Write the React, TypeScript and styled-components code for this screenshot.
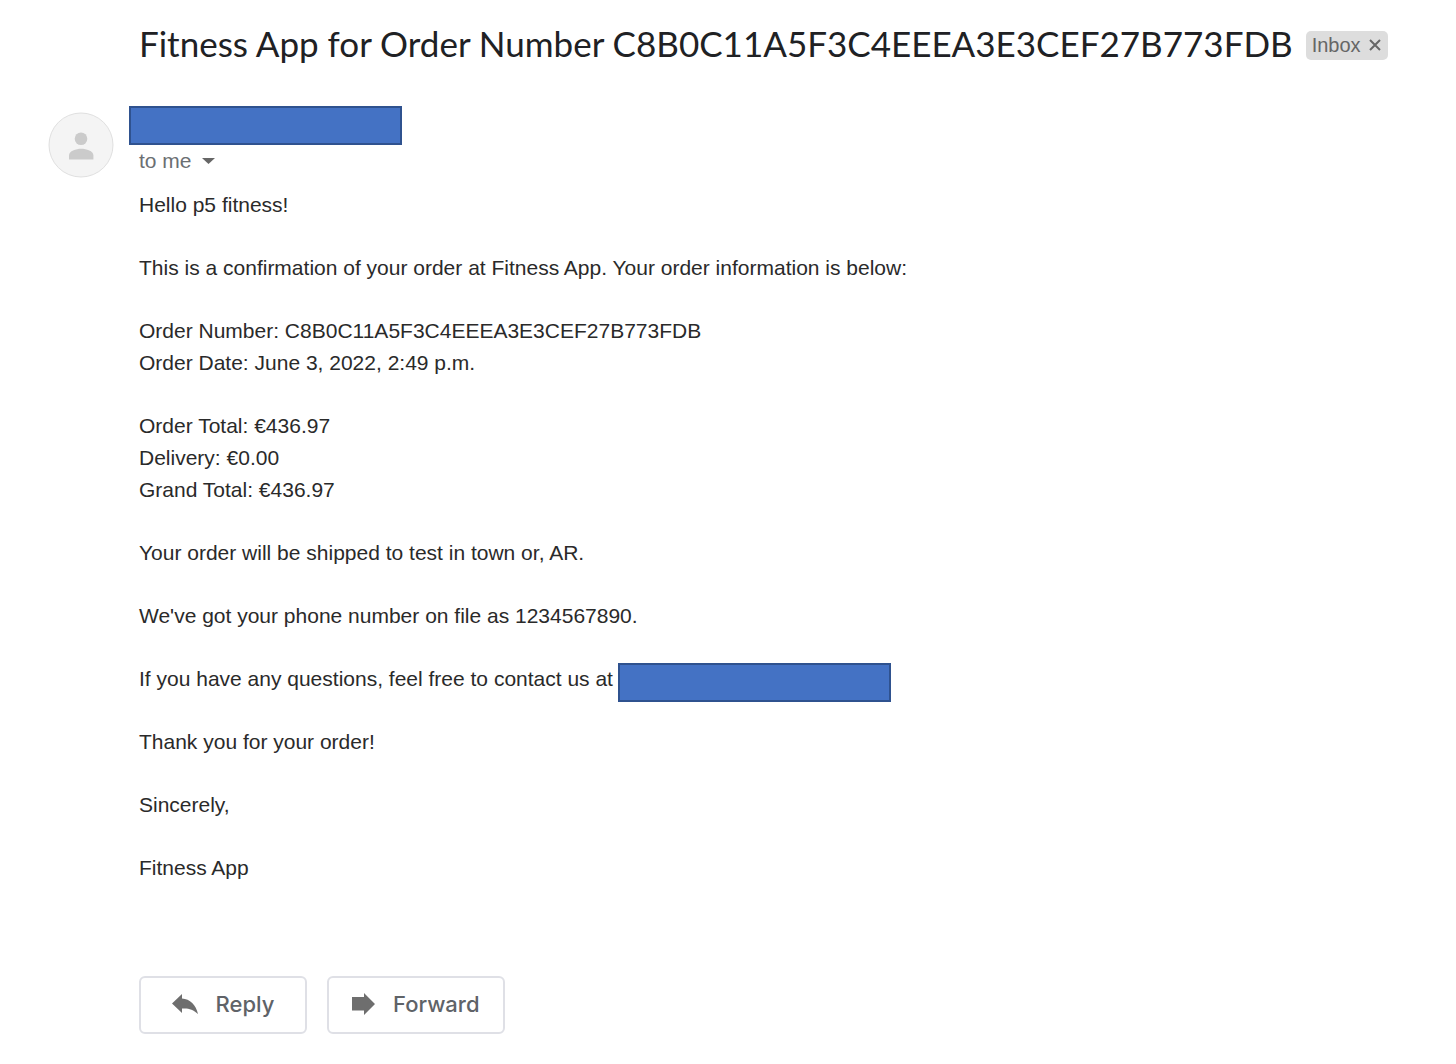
import React from 'react';
import styled, { createGlobalStyle } from 'styled-components';

const GlobalStyle = createGlobalStyle`
  * { box-sizing: border-box; }
  body { margin: 0; background: #fff; color: #2a2a2a; font-family: "Liberation Sans", Arial, sans-serif; }
`;

const Message = styled.main`
  padding: 20px 48px 30px;
`;
const Header = styled.header`
  display: flex;
  align-items: center;
  gap: 13px;
  padding-left: 91px;
  height: 50px;
`;
const Subject = styled.h1`
  margin: 0;
  padding-bottom: 4px;
  font: 400 35px/46px "Lato", sans-serif;
  color: #202124;
  white-space: nowrap;
`;
const Label = styled.div`
  display: flex;
  align-items: center;
  gap: 8px;
  height: 29px;
  padding: 0 7px 0 6px;
  border-radius: 5px;
  background: #ddd;
  color: #666;
  font-size: 20px;
`;
const Remove = styled.button`
  display: flex;
  border: 0;
  padding: 0;
  background: none;
  color: #666;
`;
const Columns = styled.div`
  display: grid;
  grid-template-columns: 66px minmax(0, 1fr);
  column-gap: 15px;
  padding-top: 36px;
`;
const Avatar = styled.svg`
  margin-top: 6px;
`;
const Redacted = styled.div`
  flex: none;
  width: 273px;
  height: 39px;
  border: 2px solid #2f528f;
  background: #4472c4;
`;
const Content = styled.div`
  padding-left: 10px;
`;
const Recipient = styled.button`
  display: flex;
  align-items: center;
  gap: 10px;
  border: 0;
  padding: 0;
  height: 32px;
  background: none;
  color: #6b6f73;
  font: 21px/32px "Liberation Sans", Arial, sans-serif;
`;
const Body = styled.div`
  display: flex;
  flex-direction: column;
  gap: 31px;
  padding-top: 12px;
  font-size: 21px;
  line-height: 32px;
`;
const Paragraph = styled.p`
  margin: 0;
`;
const Contact = styled.div`
  display: flex;
  gap: 5px;
  height: 32px;
`;
const Actions = styled.div`
  display: flex;
  gap: 20px;
  padding-top: 92px;
`;
const Action = styled.button`
  display: flex;
  align-items: center;
  justify-content: center;
  gap: 18px;
  min-width: 168px;
  height: 58px;
  padding: 0 23px 2px;
  border: 2px solid #dfe0e6;
  border-radius: 6px;
  background: #fff;
  color: #5f6368;
  font: 500 22px "Inter", sans-serif;
`;

export default function App() {
  return (
    <Message>
      <GlobalStyle />
      <Header>
        <Subject>Fitness App for Order Number C8B0C11A5F3C4EEEA3E3CEF27B773FDB</Subject>
        <Label>
          Inbox
          <Remove aria-label="Remove label">
            <svg width="12" height="12" viewBox="0 0 12 12" stroke="currentColor" strokeWidth="2"><path d="M1 1l10 10M11 1L1 11" /></svg>
          </Remove>
        </Label>
      </Header>
      <Columns>
        <Avatar width="66" height="66" viewBox="0 0 66 66">
          <circle cx="33" cy="33" r="32" fill="#f4f4f4" stroke="#e0e0e0" />
          <circle cx="33" cy="26.7" r="6.3" fill="#cbcbcb" />
          <path d="M21 47.400v-4c0-4.500 7-6.700 12.200-6.700s12.200 2.200 12.200 6.700v4z" fill="#cbcbcb" />
        </Avatar>
        <div>
          <Redacted />
          <Content>
            <Recipient>
              to me
              <svg width="13" height="6" viewBox="0 0 13 6"><path d="M0 0h13L6.500 6z" fill="#666" /></svg>
            </Recipient>
            <Body>
              <Paragraph>Hello p5 fitness!</Paragraph>
              <Paragraph>This is a confirmation of your order at Fitness App. Your order information is below:</Paragraph>
              <Paragraph>Order Number: C8B0C11A5F3C4EEEA3E3CEF27B773FDB<br />Order Date: June 3, 2022, 2:49 p.m.</Paragraph>
              <Paragraph>Order Total: €436.97<br />Delivery: €0.00<br />Grand Total: €436.97</Paragraph>
              <Paragraph>Your order will be shipped to test in town or, AR.</Paragraph>
              <Paragraph>We've got your phone number on file as 1234567890.</Paragraph>
              <Contact><span>If you have any questions, feel free to contact us at</span><Redacted /></Contact>
              <Paragraph>Thank you for your order!</Paragraph>
              <Paragraph>Sincerely,</Paragraph>
              <Paragraph>Fitness App</Paragraph>
            </Body>
            <Actions>
              <Action>
                <svg width="26" height="20" viewBox="0 0 26 20" fill="#6e6e6e"><path d="M10 0L0 9.500 10 19v-4.500c6-.5 11 .5 16 5.500C24 11 18 5 10 4.500z" /></svg>
                Reply
              </Action>
              <Action>
                <svg width="23" height="22" viewBox="0 0 23 22" fill="#6e6e6e"><path d="M0 4h12V0l11 11-11 11v-4.500H0z" /></svg>
                Forward
              </Action>
            </Actions>
          </Content>
        </div>
      </Columns>
    </Message>
  );
}
